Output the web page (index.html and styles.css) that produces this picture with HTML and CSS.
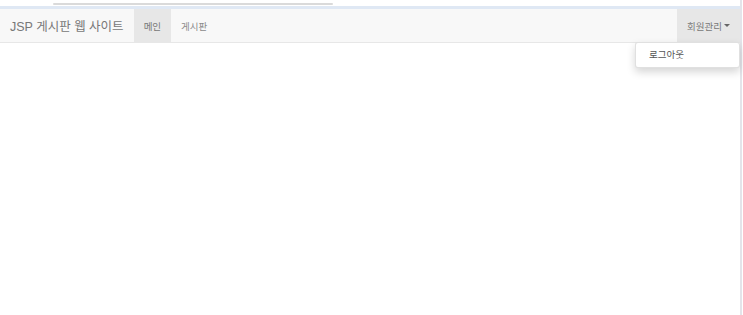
FILE: index.html
```html
<!DOCTYPE html>
<html lang="ko">
<head>
<meta charset="utf-8">
<title>JSP 게시판 웹 사이트</title>
<link rel="stylesheet" href="styles.css">
</head>
<body>
<div class="frame">
  <div class="page">
    <div class="topstrip"><div class="topbar"></div></div>
    <nav class="navbar">
      <a class="brand">JSP 게시판 웹 사이트</a>
      <ul class="nav">
        <li class="item active"><a>메인</a></li>
        <li class="item"><a>게시판</a></li>
      </ul>
      <ul class="nav nav-right">
        <li class="item open">
          <a>회원관리<span class="caret"></span></a>
          <ul class="dropdown">
            <li><a>로그아웃</a></li>
          </ul>
        </li>
      </ul>
    </nav>
  </div>
  <div class="edge"></div>
</div>
</body>
</html>
```
FILE: styles.css
```css
* { box-sizing: border-box; }
html, body { margin: 0; padding: 0; background: #fff; }
body {
  font-family: "Liberation Sans", "Noto Sans CJK KR", sans-serif;
  height: 315px;
  overflow: hidden;
}
.frame { display: flex; height: 315px; }
.page { flex: 1; min-width: 0; }
.edge { width: 3px; border-left: 2px solid #e4e4ea; background: #fff; }
.topstrip {
  height: 6px;
  background: linear-gradient(#fff 0, #fff 3px, #dfe8f4 3px, #dfe8f4 6px);
}
.topbar {
  margin-left: 53px;
  width: 280px;
  height: 2px;
  margin-top: 3px;
  background: #dadada;
  border-radius: 1px;
}
.navbar {
  display: flex;
  align-items: stretch;
  height: 34px;
  background: #f8f8f8;
  border-bottom: 1px solid #e7e7e7;
}
.brand {
  display: flex;
  align-items: center;
  padding: 0 10px;
  font-size: 12.5px;
  color: #777;
}
.nav {
  display: flex;
  list-style: none;
  margin: 0;
  padding: 0;
}
.nav-right { margin-left: auto; }
.item { position: relative; display: flex; }
.item > a {
  display: flex;
  align-items: center;
  padding: 0 10px;
  font-size: 9.5px;
  color: #8a8a8a;
}
.item.active > a, .item.open > a { background: #e7e7e7; color: #777; }
.caret {
  display: inline-block;
  margin-left: 2px;
  border-top: 3px solid #666;
  border-left: 3px solid transparent;
  border-right: 3px solid transparent;
}
.dropdown {
  position: absolute;
  top: 100%;
  right: 0;
  width: 105px;
  margin: 0;
  padding: 3px 0;
  list-style: none;
  background: #fff;
  border: 1px solid rgba(0,0,0,.12);
  border-radius: 3px;
  box-shadow: 0 4px 8px rgba(0,0,0,.17);
}
.dropdown a {
  display: block;
  padding: 2px 13px;
  font-size: 9.5px;
  line-height: 14px;
  color: #555;
}
```
